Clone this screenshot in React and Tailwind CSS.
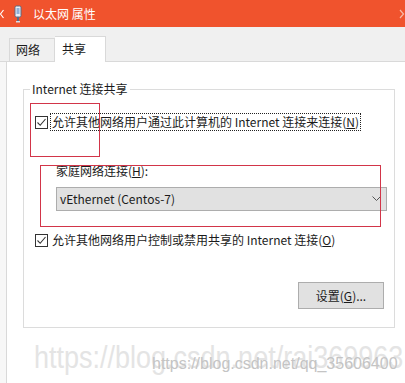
import React from 'react';

const Check = () => (
    <span className="w-[13px] h-[13px] border border-[#333] bg-white flex items-center justify-center shrink-0">
        <svg width="11" height="11" viewBox="0 0 11 11">
            <path d="M1.5 5.5 L4.2 8.3 L9.5 2" fill="none" stroke="#333" strokeWidth="1.1" />
        </svg>
    </span>
);

const App = () => {
    return (
        <div className="relative w-[405px] h-[383px] overflow-hidden bg-white text-[12px] leading-[16px] text-[#1b1b1b] font-['Microsoft_YaHei','Noto_Sans_CJK_SC',sans-serif]">
            {/* title bar */}
            <div className="h-[27px] bg-[#f0532d] flex items-center text-white">
                <svg width="5" height="10" viewBox="0 0 5 10" className="shrink-0">
                    <path d="M3.5 1 L0.5 5 L3.5 9" fill="none" stroke="#fff" strokeWidth="1.2" />
                </svg>
                <svg width="10" height="18" viewBox="0 0 10 18" className="ml-[8px] shrink-0">
                    <rect x="2" y="1" width="6" height="11" rx="1.5" fill="#e8eef6" stroke="#5a6b82" strokeWidth="1" />
                    <rect x="3.5" y="3" width="3" height="6" fill="#8fb0d8" />
                    <rect x="4" y="12" width="2" height="4" fill="#5a6b82" />
                    <rect x="3" y="16" width="4" height="1.5" fill="#d6dde8" />
                </svg>
                <span className="ml-[10px]">以太网 属性</span>
                <svg width="6" height="10" viewBox="0 0 6 10" className="ml-auto shrink-0">
                    <path d="M1 1 L4.5 5 L1 9" fill="none" stroke="#f7b9a6" strokeWidth="1.2" />
                </svg>
            </div>

            {/* tab strip */}
            <div className="h-[35px] bg-[#f0f0f0] border-b border-[#d9d9d9] flex items-end pl-[9px]">
                <div className="h-[23px] w-[46px] border border-b-0 border-[#d9d9d9] bg-[#f0f0f0] flex items-center pl-[6px]">
                    网络
                </div>
                <div className="h-[26px] w-[51px] -mb-px border border-b-0 border-l-0 border-[#d9d9d9] bg-white flex items-center pl-[7px] pb-[2px]">
                    共享
                </div>
            </div>

            {/* content */}
            <div className="flex h-[321px]">
                <div className="w-[7px] bg-[#f7f7f7] border-r border-[#d9d9d9]" />
                <div className="flex-1 pl-[16px] pt-[27px]">
                    <div className="relative w-[372px] h-[239px] border border-[#dcdcdc] flex flex-col">
                        <span className="absolute -top-[9px] left-[6px] bg-white px-[2px]">Internet 连接共享</span>

                        <div className="mt-[23px] ml-[11px] h-[18px] flex items-center">
                            <Check />
                            <span className="ml-[2px] h-[18px] px-[1px] border border-dotted border-[#222] flex items-center">
                                允许其他网络用户通过此计算机的 Internet 连接来连接(<span className="underline">N</span>)
                            </span>
                        </div>

                        <div className="mt-[32px] ml-[32px]">
                            家庭网络连接(<span className="underline">H</span>):
                        </div>

                        <div className="mt-[8px] ml-[32px] w-[331px] h-[24px] bg-[#e1e1e1] border border-[#adadad] flex items-center pl-[3px] pr-[5px]">
                            <span>vEthernet (Centos-7)</span>
                            <svg width="9" height="6" viewBox="0 0 9 6" className="ml-auto">
                                <path d="M0.5 0.5 L4.5 4.5 L8.5 0.5" fill="none" stroke="#555" strokeWidth="1" />
                            </svg>
                        </div>

                        <div className="mt-[21px] ml-[11px] h-[16px] flex items-center">
                            <Check />
                            <span className="ml-[4px]">
                                允许其他网络用户控制或禁用共享的 Internet 连接(<span className="underline">O</span>)
                            </span>
                        </div>

                        <button className="mt-[34px] ml-[274px] w-[86px] h-[27px] bg-[#e1e1e1] border border-[#adadad] flex items-center justify-center">
                            设置(<span className="underline">G</span>)...
                        </button>
                    </div>
                </div>
            </div>

            {/* red annotation boxes */}
            <div className="absolute left-[30px] top-[103px] w-[70px] h-[54px] border border-[#d23549]" />
            <div className="absolute left-[40px] top-[165px] w-[341px] h-[62px] border border-[#d23549]" />

            {/* watermark */}
            <div className="absolute left-[34px] top-[340px] text-[27px] leading-[30px] text-[#e4e4e4] scale-y-[1.15] origin-top font-['Liberation_Sans',Arial,sans-serif] whitespace-nowrap">
                https://blog.csdn.net/rai369963
            </div>
            <div className="absolute left-[152px] top-[356px] text-[16px] leading-[16px] text-[#c4c4c4] font-['Liberation_Sans',Arial,sans-serif] whitespace-nowrap">
                https://blog.csdn.net/qq_35606400
            </div>
        </div>
    );
};

export default App;
